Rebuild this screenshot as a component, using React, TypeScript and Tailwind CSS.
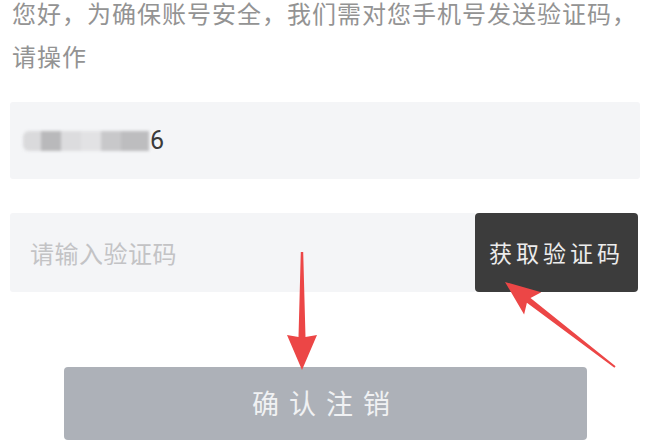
import React from 'react';

const CJK = "font-['Noto_Sans_CJK_SC',sans-serif]";

const Arrows: React.FC = () => (
  <svg className="pointer-events-none absolute inset-0" width="650" height="443" viewBox="0 0 650 443">
    {/* down arrow to confirm button */}
    <polygon
      fill="#ec4646"
      points="300.8,252 303.2,252 305.5,337 317,335 302,370 287,335 298.5,337"
    />
    {/* diagonal arrow to code button */}
    <polygon
      fill="#ec4646"
      points="505,282 541.3,292.3 530.5,297.9 615.6,366.2 614.4,367.8 526.9,302.7 524.1,314.5"
    />
  </svg>
);

const App: React.FC = () => {
  return (
    <div className={`relative h-[443px] w-[650px] overflow-hidden bg-white ${CJK}`}>
      {/* Notice */}
      <p className="-mt-[9px] px-[12px] text-[24px] leading-[43px] tracking-[1px] text-[#939393]">
        您好，为确保账号安全，我们需对您手机号发送验证码，请操作
      </p>

      {/* Phone number */}
      <div className="mx-[10px] mt-[25px] flex h-[77px] items-center rounded-[3px] bg-[#f4f5f7] px-[13px]">
        <div className="flex h-[20px] items-center blur-[1.5px]">
          <span className="h-[20px] w-[18px] rounded-l-[6px] bg-[#dadadc]" />
          <span className="h-[20px] w-[20px] bg-[#b9b9bb]" />
          <span className="h-[20px] w-[20px] bg-[#dcdcde]" />
          <span className="h-[20px] w-[20px] bg-[#e2e2e4]" />
          <span className="h-[20px] w-[20px] bg-[#c8c8ca]" />
          <span className="h-[20px] w-[28px] bg-[#bdbdbf]" />
        </div>
        <span className="ml-[1px] font-['Roboto',sans-serif] text-[25px] leading-none text-[#3a3a3a]">6</span>
      </div>

      {/* Verification code */}
      <div className="ml-[10px] mr-[12px] mt-[34px] flex h-[79px] items-stretch">
        <div className="flex flex-1 items-center rounded-l-[3px] bg-[#f4f5f7] pl-[20px] text-[24px] tracking-[0.5px] text-[#c3c3c5]">
          请输入验证码
        </div>
        <button className="flex w-[163px] items-center justify-center rounded-[4px] bg-[#3c3c3c] text-[23px] tracking-[4px] text-[#ececec]">
          获取验证码
        </button>
      </div>

      {/* Confirm */}
      <div className="mt-[75px] flex justify-center">
        <button className="flex h-[73px] w-[523px] items-center justify-center rounded-[4px] bg-[#adb1b8] pl-[2px] text-[27px] tracking-[10px] text-[#f0f1f3]">
          确认注销
        </button>
      </div>

      <Arrows />
    </div>
  );
};

export default App;
